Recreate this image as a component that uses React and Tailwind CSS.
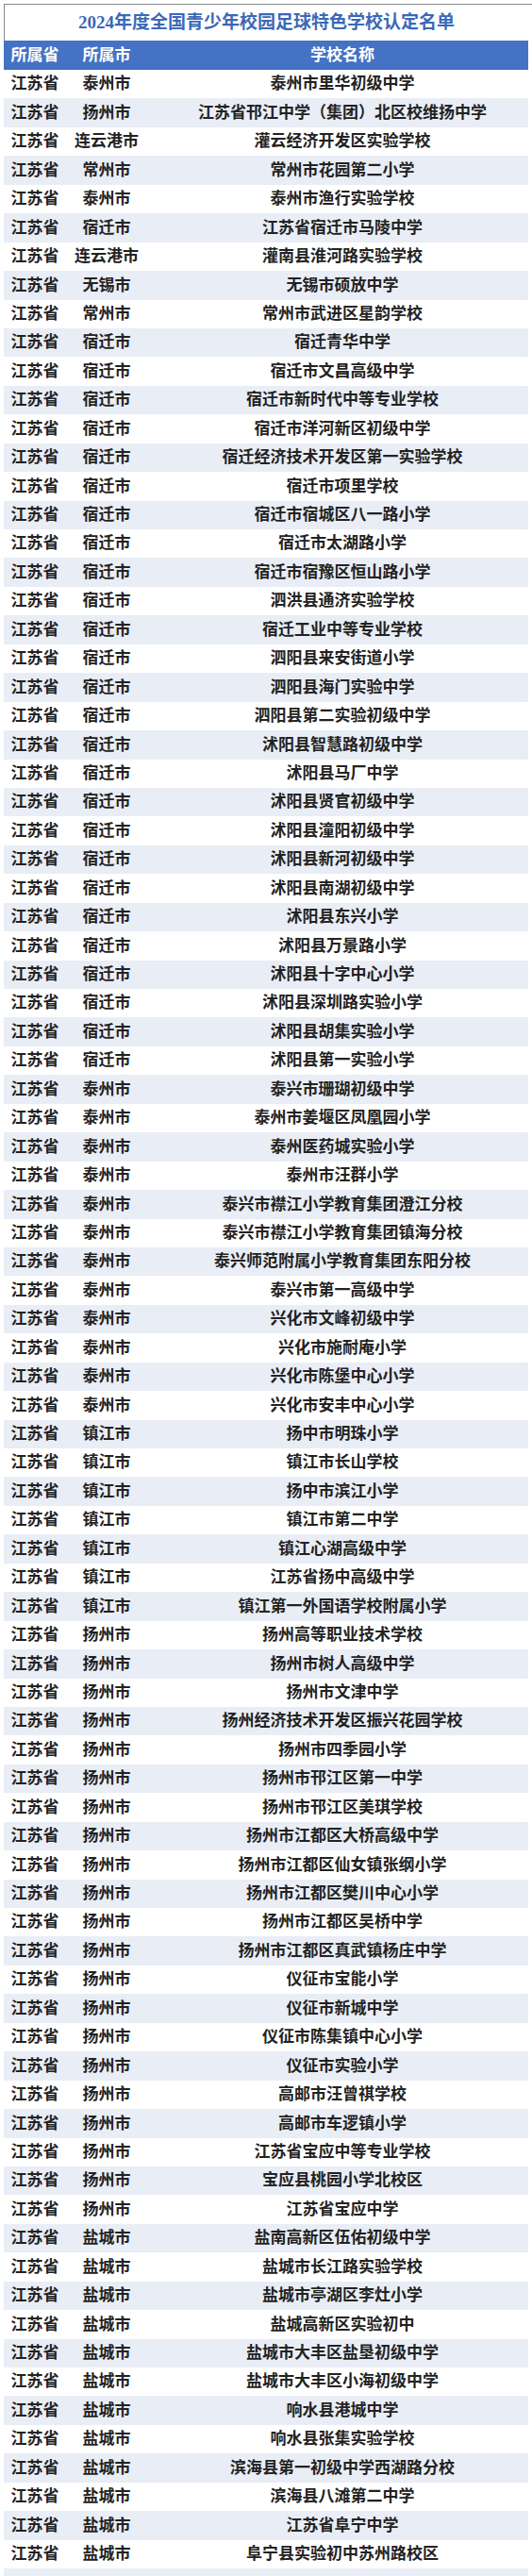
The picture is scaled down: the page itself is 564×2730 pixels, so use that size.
import React from "react";

const rows = [
  ["泰州市", "泰州市里华初级中学"],
  ["扬州市", "江苏省邗江中学（集团）北区校维扬中学"],
  ["连云港市", "灌云经济开发区实验学校"],
  ["常州市", "常州市花园第二小学"],
  ["泰州市", "泰州市渔行实验学校"],
  ["宿迁市", "江苏省宿迁市马陵中学"],
  ["连云港市", "灌南县淮河路实验学校"],
  ["无锡市", "无锡市硕放中学"],
  ["常州市", "常州市武进区星韵学校"],
  ["宿迁市", "宿迁青华中学"],
  ["宿迁市", "宿迁市文昌高级中学"],
  ["宿迁市", "宿迁市新时代中等专业学校"],
  ["宿迁市", "宿迁市洋河新区初级中学"],
  ["宿迁市", "宿迁经济技术开发区第一实验学校"],
  ["宿迁市", "宿迁市项里学校"],
  ["宿迁市", "宿迁市宿城区八一路小学"],
  ["宿迁市", "宿迁市太湖路小学"],
  ["宿迁市", "宿迁市宿豫区恒山路小学"],
  ["宿迁市", "泗洪县通济实验学校"],
  ["宿迁市", "宿迁工业中等专业学校"],
  ["宿迁市", "泗阳县来安街道小学"],
  ["宿迁市", "泗阳县海门实验中学"],
  ["宿迁市", "泗阳县第二实验初级中学"],
  ["宿迁市", "沭阳县智慧路初级中学"],
  ["宿迁市", "沭阳县马厂中学"],
  ["宿迁市", "沭阳县贤官初级中学"],
  ["宿迁市", "沭阳县潼阳初级中学"],
  ["宿迁市", "沭阳县新河初级中学"],
  ["宿迁市", "沭阳县南湖初级中学"],
  ["宿迁市", "沭阳县东兴小学"],
  ["宿迁市", "沭阳县万景路小学"],
  ["宿迁市", "沭阳县十字中心小学"],
  ["宿迁市", "沭阳县深圳路实验小学"],
  ["宿迁市", "沭阳县胡集实验小学"],
  ["宿迁市", "沭阳县第一实验小学"],
  ["泰州市", "泰兴市珊瑚初级中学"],
  ["泰州市", "泰州市姜堰区凤凰园小学"],
  ["泰州市", "泰州医药城实验小学"],
  ["泰州市", "泰州市汪群小学"],
  ["泰州市", "泰兴市襟江小学教育集团澄江分校"],
  ["泰州市", "泰兴市襟江小学教育集团镇海分校"],
  ["泰州市", "泰兴师范附属小学教育集团东阳分校"],
  ["泰州市", "泰兴市第一高级中学"],
  ["泰州市", "兴化市文峰初级中学"],
  ["泰州市", "兴化市施耐庵小学"],
  ["泰州市", "兴化市陈堡中心小学"],
  ["泰州市", "兴化市安丰中心小学"],
  ["镇江市", "扬中市明珠小学"],
  ["镇江市", "镇江市长山学校"],
  ["镇江市", "扬中市滨江小学"],
  ["镇江市", "镇江市第二中学"],
  ["镇江市", "镇江心湖高级中学"],
  ["镇江市", "江苏省扬中高级中学"],
  ["镇江市", "镇江第一外国语学校附属小学"],
  ["扬州市", "扬州高等职业技术学校"],
  ["扬州市", "扬州市树人高级中学"],
  ["扬州市", "扬州市文津中学"],
  ["扬州市", "扬州经济技术开发区振兴花园学校"],
  ["扬州市", "扬州市四季园小学"],
  ["扬州市", "扬州市邗江区第一中学"],
  ["扬州市", "扬州市邗江区美琪学校"],
  ["扬州市", "扬州市江都区大桥高级中学"],
  ["扬州市", "扬州市江都区仙女镇张纲小学"],
  ["扬州市", "扬州市江都区樊川中心小学"],
  ["扬州市", "扬州市江都区吴桥中学"],
  ["扬州市", "扬州市江都区真武镇杨庄中学"],
  ["扬州市", "仪征市宝能小学"],
  ["扬州市", "仪征市新城中学"],
  ["扬州市", "仪征市陈集镇中心小学"],
  ["扬州市", "仪征市实验小学"],
  ["扬州市", "高邮市汪曾祺学校"],
  ["扬州市", "高邮市车逻镇小学"],
  ["扬州市", "江苏省宝应中等专业学校"],
  ["扬州市", "宝应县桃园小学北校区"],
  ["扬州市", "江苏省宝应中学"],
  ["盐城市", "盐南高新区伍佑初级中学"],
  ["盐城市", "盐城市长江路实验学校"],
  ["盐城市", "盐城市亭湖区李灶小学"],
  ["盐城市", "盐城高新区实验初中"],
  ["盐城市", "盐城市大丰区盐垦初级中学"],
  ["盐城市", "盐城市大丰区小海初级中学"],
  ["盐城市", "响水县港城中学"],
  ["盐城市", "响水县张集实验学校"],
  ["盐城市", "滨海县第一初级中学西湖路分校"],
  ["盐城市", "滨海县八滩第二中学"],
  ["盐城市", "江苏省阜宁中学"],
  ["盐城市", "阜宁县实验初中苏州路校区"],
];

const font = { fontFamily: '"Liberation Serif", "Noto Sans CJK SC", serif' };

export default function App() {
  return (
    <div className="min-h-screen bg-white pl-[4px] pt-[4px]" style={font}>
      <div className="flex h-[39px] items-center justify-center border-l border-t border-[#8a8a8a] pr-[4px]">
        <h1 className="text-[19px] font-bold text-[#3b68b6]">
          2024年度全国青少年校园足球特色学校认定名单
        </h1>
      </div>

      <div className="mr-[4px]">
        <div className="grid h-[31px] grid-cols-[66px_86px_1fr] items-center bg-[#4472c4] text-[17px] font-bold text-white">
          <div className="text-center">所属省</div>
          <div className="text-center">所属市</div>
          <div className="pl-[10px] text-center">学校名称</div>
        </div>

        {rows.map(([city, school], i) => (
          <div
            key={school}
            className={`grid h-[30.45px] grid-cols-[66px_86px_1fr] items-center text-[17px] font-semibold text-[#222222] ${
              i % 2 === 1 ? "bg-[#e9edf5]" : "bg-white"
            }`}
          >
            <div className="text-center">江苏省</div>
            <div className="text-center">{city}</div>
            <div className="pl-[10px] text-center">{school}</div>
          </div>
        ))}
        <div className="h-[30.45px] bg-[#e9edf5]" />
      </div>
    </div>
  );
}
